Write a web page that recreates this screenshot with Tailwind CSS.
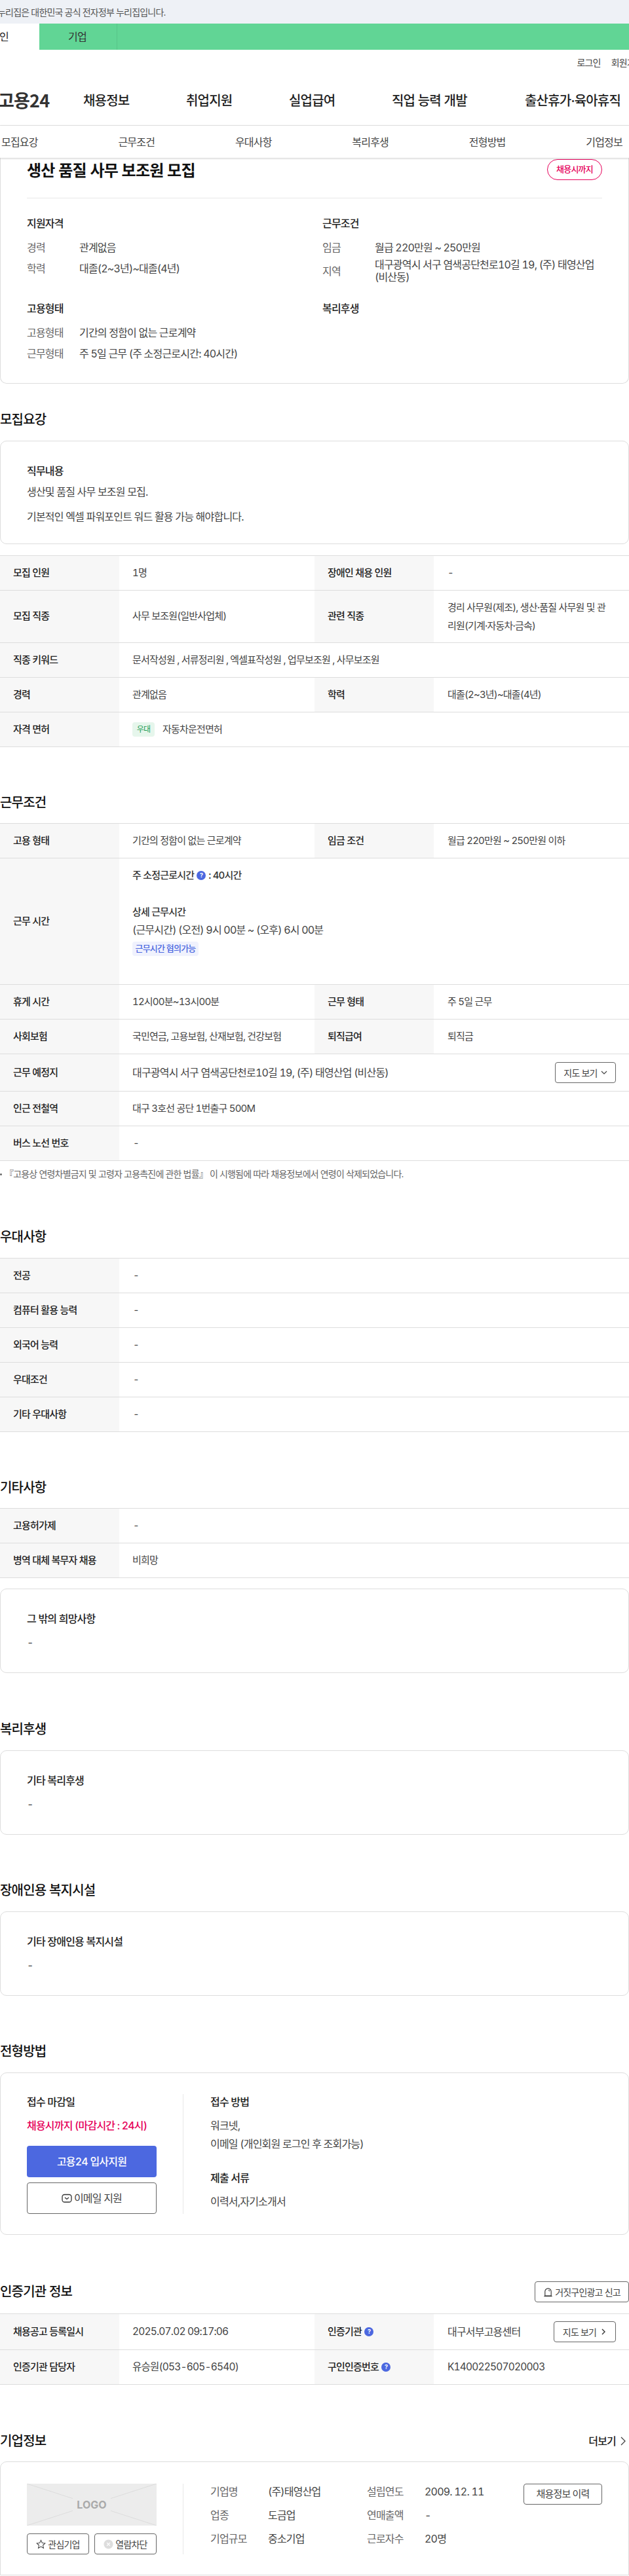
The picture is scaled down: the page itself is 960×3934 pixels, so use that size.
<!DOCTYPE html>
<html lang="ko">
<head>
<meta charset="UTF-8" />
<title>고용24 채용정보</title>
<script src="https://cdn.jsdelivr.net/npm/@tailwindcss/browser@4"></script>
</head>
<body class="font-['Inter','Noto_Sans_CJK_KR',sans-serif] text-[#222] tracking-[-0.05em] tabular-nums overflow-x-hidden bg-white">

<!-- gov banner -->
<div class="h-9 bg-[#eef1f6] flex items-center overflow-hidden">
  <p class="ml-[-19px] text-[14px] text-[#555] whitespace-nowrap">이 누리집은 대한민국 공식 전자정부 누리집입니다.</p>
</div>

<!-- member tabs -->
<div class="h-10 bg-[#61d595] flex text-[16px]">
  <div class="w-[60px] bg-white flex items-center overflow-hidden text-[#222]"><span class="ml-[-15px]">개인</span></div>
  <div class="w-[119px] border-r border-[#57c588] flex items-center justify-center text-[#333] pr-[2px]">기업</div>
</div>

<!-- header -->
<header class="h-[116px] border-b border-[#e5e5e5] flex flex-col overflow-hidden">
  <div class="flex justify-end gap-[16px] pt-[9px] text-[14px] text-[#444]">
    <span>로그인</span>
    <span class="mr-[-21px]">회원가입</span>
  </div>
  <nav class="mt-[10px] flex-1 flex items-center text-[20px] font-medium whitespace-nowrap">
    <span class="ml-[-3px] w-[130px] font-['Noto_Sans_CJK_KR',sans-serif] text-[27px] font-bold text-[#333]">고용24</span>
    <span class="w-[157px]">채용정보</span>
    <span class="w-[157px]">취업지원</span>
    <span class="w-[157px]">실업급여</span>
    <span class="w-[203px]">직업 능력 개발</span>
    <span>출산휴가·육아휴직</span>
  </nav>
</header>

<!-- anchor tabs -->
<div class="relative z-10 h-[49px] bg-white flex justify-between items-center pl-[2px] pr-[10px] text-[16px] text-[#444] shadow-[0_1px_3px_rgba(0,0,0,0.2)]">
  <span>모집요강</span><span>근무조건</span><span>우대사항</span><span>복리후생</span><span>전형방법</span><span>기업정보</span>
</div>

<!-- summary card -->
<section class="h-[345px] border border-t-0 border-[#ddd] rounded-b-[10px] px-[40px]">
  <div class="h-[62px] flex justify-between items-center border-b border-[#e8e8e8]">
    <h1 class="text-[24px] font-bold text-[#111] mt-[-22px]">생산 품질 사무 보조원 모집</h1>
    <span class="w-[84px] h-8 mt-[-26px] rounded-full border border-[#e6005a] text-[#e6005a] text-[13px] font-medium flex items-center justify-center">채용시까지</span>
  </div>
  <div class="grid grid-cols-[451px_1fr] mt-[26px]">
    <div class="h-[130px]">
      <h3 class="text-[16px] font-medium leading-6">지원자격</h3>
      <div class="mt-[13px] flex flex-col gap-[8px] text-[16px] leading-6 text-[#444]">
        <div class="flex"><span class="w-[80px] text-[#666]">경력</span><span>관계없음</span></div>
        <div class="flex"><span class="w-[80px] text-[#666]">학력</span><span>대졸(2~3년)~대졸(4년)</span></div>
      </div>
    </div>
    <div class="h-[130px]">
      <h3 class="text-[16px] font-medium leading-6">근무조건</h3>
      <div class="mt-[13px] flex flex-col gap-[8px] text-[16px] leading-6 text-[#444]">
        <div class="flex"><span class="w-[80px] text-[#666]">임금</span><span>월급 220만원 ~ 250만원</span></div>
        <div class="flex items-center mt-[-3px]"><span class="w-[80px] shrink-0 text-[#666]">지역</span><span class="leading-[19px]">대구광역시 서구 염색공단천로10길 19, (주) 태영산업 (비산동)</span></div>
      </div>
    </div>
    <div>
      <h3 class="text-[16px] font-medium leading-6">고용형태</h3>
      <div class="mt-[13px] flex flex-col gap-[8px] text-[16px] leading-6 text-[#444]">
        <div class="flex"><span class="w-[80px] text-[#666]">고용형태</span><span>기간의 정함이 없는 근로계약</span></div>
        <div class="flex"><span class="w-[80px] text-[#666]">근무형태</span><span>주 5일 근무 (주 소정근로시간: 40시간)</span></div>
      </div>
    </div>
    <div>
      <h3 class="text-[16px] font-medium leading-6">복리후생</h3>
    </div>
  </div>
</section>

<!-- 모집요강 -->
<h2 class="mt-[41px] text-[20px] font-medium leading-7 text-[#111]">모집요강</h2>
<section class="mt-[18px] h-[158px] border border-[#ddd] rounded-[10px] px-[40px] pt-[33px]">
  <h3 class="text-[16px] font-medium leading-6">직무내용</h3>
  <p class="mt-[8px] text-[16px] leading-6 text-[#444]">생산및 품질 사무 보조원 모집.</p>
  <p class="mt-[14px] text-[16px] leading-6 text-[#444]">기본적인 엑셀 파워포인트 워드 활용 가능 해야합니다.</p>
</section>

<div class="mt-[17px] border-t border-[#ddd] text-[15px]">
  <div class="flex h-[53px] border-b border-[#ddd]">
    <div class="w-[182px] bg-[#f7f7f7] flex items-center pl-5 font-medium">모집 인원</div>
    <div class="w-[298px] flex items-center pl-5 text-[#444]">1명</div>
    <div class="w-[182px] bg-[#f7f7f7] flex items-center pl-5 font-medium">장애인 채용 인원</div>
    <div class="flex-1 flex items-center pl-[21px] text-[#444]">-</div>
  </div>
  <div class="flex h-[80px] border-b border-[#ddd]">
    <div class="w-[182px] bg-[#f7f7f7] flex items-center pl-5 font-medium">모집 직종</div>
    <div class="w-[298px] flex items-center pl-5 text-[#444]">사무 보조원(일반사업체)</div>
    <div class="w-[182px] bg-[#f7f7f7] flex items-center pl-5 font-medium">관련 직종</div>
    <div class="flex-1 flex items-center pl-[21px] pr-[28px] leading-[28px] text-[#444]">경리 사무원(제조), 생산·품질 사무원 및 관리원(기계·자동차·금속)</div>
  </div>
  <div class="flex h-[53px] border-b border-[#ddd]">
    <div class="w-[182px] bg-[#f7f7f7] flex items-center pl-5 font-medium">직종 키워드</div>
    <div class="flex-1 flex items-center pl-5 text-[#444]">문서작성원 , 서류정리원 , 엑셀표작성원 , 업무보조원 , 사무보조원</div>
  </div>
  <div class="flex h-[53px] border-b border-[#ddd]">
    <div class="w-[182px] bg-[#f7f7f7] flex items-center pl-5 font-medium">경력</div>
    <div class="w-[298px] flex items-center pl-5 text-[#444]">관계없음</div>
    <div class="w-[182px] bg-[#f7f7f7] flex items-center pl-5 font-medium">학력</div>
    <div class="flex-1 flex items-center pl-[21px] text-[#444]">대졸(2~3년)~대졸(4년)</div>
  </div>
  <div class="flex h-[53px] border-b border-[#ddd]">
    <div class="w-[182px] bg-[#f7f7f7] flex items-center pl-5 font-medium">자격 면허</div>
    <div class="flex-1 flex items-center pl-5 text-[#444]">
      <span class="w-[34px] h-[22px] rounded-[4px] bg-[#e6f6ec] text-[#1f9d55] text-[12px] flex items-center justify-center mr-3">우대</span>자동차운전면허
    </div>
  </div>
</div>

<!-- 근무조건 -->
<h2 class="mt-[71px] text-[20px] font-medium leading-7 text-[#111]">근무조건</h2>
<div class="mt-[17px] border-t border-[#ddd] text-[15px]">
  <div class="flex h-[53px] border-b border-[#ddd]">
    <div class="w-[182px] bg-[#f7f7f7] flex items-center pl-5 font-medium">고용 형태</div>
    <div class="w-[298px] flex items-center pl-5 text-[#444]">기간의 정함이 없는 근로계약</div>
    <div class="w-[182px] bg-[#f7f7f7] flex items-center pl-5 font-medium">임금 조건</div>
    <div class="flex-1 flex items-center pl-[21px] text-[#444]">월급 220만원 ~ 250만원 이하</div>
  </div>
  <div class="flex h-[193px] border-b border-[#ddd]">
    <div class="w-[182px] bg-[#f7f7f7] flex items-center pl-5 font-medium">근무 시간</div>
    <div class="flex-1 pl-5 pt-[14px] text-[#444]">
      <p class="flex items-center font-medium text-[#333] leading-6">주 소정근로시간<span class="mx-1 w-[14px] h-[14px] rounded-full bg-[#4c68e0] text-white text-[9px] font-bold flex items-center justify-center">?</span>: 40시간</p>
      <p class="mt-[32px] font-medium text-[#333] leading-6">상세 근무시간</p>
      <p class="mt-[3px] text-[16px] leading-6">(근무시간) (오전) 9시 00분 ~ (오후) 6시 00분</p>
      <p class="mt-[6px] w-[101px] h-[22px] flex items-center justify-center rounded-[4px] bg-[#f0f2fd] text-[#4c68e0] text-[13px] font-medium">근무시간 협의가능</p>
    </div>
  </div>
  <div class="flex h-[53px] border-b border-[#ddd]">
    <div class="w-[182px] bg-[#f7f7f7] flex items-center pl-5 font-medium">휴게 시간</div>
    <div class="w-[298px] flex items-center pl-5 text-[#444]">12시00분~13시00분</div>
    <div class="w-[182px] bg-[#f7f7f7] flex items-center pl-5 font-medium">근무 형태</div>
    <div class="flex-1 flex items-center pl-[21px] text-[#444]">주 5일 근무</div>
  </div>
  <div class="flex h-[53px] border-b border-[#ddd]">
    <div class="w-[182px] bg-[#f7f7f7] flex items-center pl-5 font-medium">사회보험</div>
    <div class="w-[298px] flex items-center pl-5 text-[#444]">국민연금, 고용보험, 산재보험, 건강보험</div>
    <div class="w-[182px] bg-[#f7f7f7] flex items-center pl-5 font-medium">퇴직급여</div>
    <div class="flex-1 flex items-center pl-[21px] text-[#444]">퇴직금</div>
  </div>
  <div class="flex h-[57px] border-b border-[#ddd]">
    <div class="w-[182px] bg-[#f7f7f7] flex items-center pl-5 font-medium">근무 예정지</div>
    <div class="flex-1 flex items-center justify-between pl-5 pr-5 text-[#444]">
      <span class="text-[16px]">대구광역시 서구 염색공단천로10길 19, (주) 태영산업 (비산동)</span>
      <span class="w-[93px] h-8 border border-[#666] rounded-[4px] text-[14px] flex items-center justify-center gap-[5px]">지도 보기
        <svg class="w-[10px] h-[10px]" viewBox="0 0 10 10" fill="none" stroke="#444" stroke-width="1.2"><path d="M1 3l4 4 4-4"/></svg>
      </span>
    </div>
  </div>
  <div class="flex h-[53px] border-b border-[#ddd]">
    <div class="w-[182px] bg-[#f7f7f7] flex items-center pl-5 font-medium">인근 전철역</div>
    <div class="flex-1 flex items-center pl-5 text-[#444]">대구 3호선 공단 1번출구 500M</div>
  </div>
  <div class="flex h-[53px] border-b border-[#ddd]">
    <div class="w-[182px] bg-[#f7f7f7] flex items-center pl-5 font-medium">버스 노선 번호</div>
    <div class="flex-1 flex items-center pl-[21px] text-[#444]">-</div>
  </div>
</div>
<p class="mt-[10px] text-[14px] leading-5 text-[#666] flex items-center"><span class="w-[3px] h-[3px] rounded-full bg-[#666] mr-[4px]"></span>『고용상 연령차별금지 및 고령자 고용촉진에 관한 법률』 이 시행됨에 따라 채용정보에서 연령이 삭제되었습니다.</p>

<!-- 우대사항 -->
<h2 class="mt-[72px] text-[20px] font-medium leading-7 text-[#111]">우대사항</h2>
<div class="mt-[18px] border-t border-[#ddd] text-[15px]">
  <div class="flex h-[53px] border-b border-[#ddd]"><div class="w-[182px] bg-[#f7f7f7] flex items-center pl-5 font-medium">전공</div><div class="flex-1 flex items-center pl-[21px] text-[#444]">-</div></div>
  <div class="flex h-[53px] border-b border-[#ddd]"><div class="w-[182px] bg-[#f7f7f7] flex items-center pl-5 font-medium">컴퓨터 활용 능력</div><div class="flex-1 flex items-center pl-[21px] text-[#444]">-</div></div>
  <div class="flex h-[53px] border-b border-[#ddd]"><div class="w-[182px] bg-[#f7f7f7] flex items-center pl-5 font-medium">외국어 능력</div><div class="flex-1 flex items-center pl-[21px] text-[#444]">-</div></div>
  <div class="flex h-[53px] border-b border-[#ddd]"><div class="w-[182px] bg-[#f7f7f7] flex items-center pl-5 font-medium">우대조건</div><div class="flex-1 flex items-center pl-[21px] text-[#444]">-</div></div>
  <div class="flex h-[53px] border-b border-[#ddd]"><div class="w-[182px] bg-[#f7f7f7] flex items-center pl-5 font-medium">기타 우대사항</div><div class="flex-1 flex items-center pl-[21px] text-[#444]">-</div></div>
</div>

<!-- 기타사항 -->
<h2 class="mt-[71px] text-[20px] font-medium leading-7 text-[#111]">기타사항</h2>
<div class="mt-[17px] border-t border-[#ddd] text-[15px]">
  <div class="flex h-[53px] border-b border-[#ddd]"><div class="w-[182px] bg-[#f7f7f7] flex items-center pl-5 font-medium">고용허가제</div><div class="flex-1 flex items-center pl-[21px] text-[#444]">-</div></div>
  <div class="flex h-[53px] border-b border-[#ddd]"><div class="w-[182px] bg-[#f7f7f7] flex items-center pl-5 font-medium">병역 대체 복무자 채용</div><div class="flex-1 flex items-center pl-5 text-[#444]">비희망</div></div>
</div>
<section class="mt-[16px] h-[129px] border border-[#ddd] rounded-[10px] px-[40px] pt-[33px]">
  <h3 class="text-[16px] font-medium leading-6">그 밖의 희망사항</h3>
  <p class="mt-[12px] text-[16px] leading-6 text-[#444]">-</p>
</section>

<!-- 복리후생 -->
<h2 class="mt-[72px] text-[20px] font-medium leading-7 text-[#111]">복리후생</h2>
<section class="mt-[18px] h-[129px] border border-[#ddd] rounded-[10px] px-[40px] pt-[33px]">
  <h3 class="text-[16px] font-medium leading-6">기타 복리후생</h3>
  <p class="mt-[12px] text-[16px] leading-6 text-[#444]">-</p>
</section>

<!-- 장애인용 복지시설 -->
<h2 class="mt-[71px] text-[20px] font-medium leading-7 text-[#111]">장애인용 복지시설</h2>
<section class="mt-[18px] h-[129px] border border-[#ddd] rounded-[10px] px-[40px] pt-[33px]">
  <h3 class="text-[16px] font-medium leading-6">기타 장애인용 복지시설</h3>
  <p class="mt-[12px] text-[16px] leading-6 text-[#444]">-</p>
</section>

<!-- 전형방법 -->
<h2 class="mt-[71px] text-[20px] font-medium leading-7 text-[#111]">전형방법</h2>
<section class="mt-[18px] h-[248px] border border-[#ddd] rounded-[10px] px-[40px] pt-[32px] flex items-start">
  <div class="w-[239px] h-[183px] border-r border-[#e8e8e8] pr-[40px]">
    <h3 class="text-[16px] font-medium leading-6">접수 마감일</h3>
    <p class="mt-[12px] text-[16px] font-medium leading-6 text-[#e6005a] whitespace-nowrap">채용시까지 (마감시간 : 24시)</p>
    <div class="mt-[19px] h-12 rounded-[4px] bg-[#4c68e0] text-white text-[16px] font-medium flex items-center justify-center">고용24 입사지원</div>
    <div class="mt-2 h-12 rounded-[4px] border border-[#666] text-[16px] text-[#444] flex items-center justify-center gap-[3px]">
      <svg class="w-4 h-4" viewBox="0 0 16 16" fill="none" stroke="#333" stroke-width="1.3"><rect x="1" y="2.5" width="14" height="11.5" rx="3.5"/><path d="M5 7l3 2.5L11 7"/></svg>이메일 지원
    </div>
  </div>
  <div class="pl-[41px]">
    <h3 class="text-[16px] font-medium leading-6">접수 방법</h3>
    <p class="mt-[10px] text-[16px] leading-7 text-[#444]">워크넷,<br>이메일 (개인회원 로그인 후 조회가능)</p>
    <h3 class="mt-[26px] text-[16px] font-medium leading-6">제출 서류</h3>
    <p class="mt-[12px] text-[16px] leading-6 text-[#444]">이력서,자기소개서</p>
  </div>
</section>

<!-- 인증기관 정보 -->
<div class="mt-[71px] flex justify-between items-center">
  <h2 class="text-[20px] font-medium leading-7 text-[#111]">인증기관 정보</h2>
  <span class="w-[144px] h-8 border border-[#666] rounded-[4px] text-[14px] text-[#444] flex items-center justify-center gap-[3px]">
    <svg class="w-[15px] h-[15px]" viewBox="0 0 16 16" fill="none" stroke="#333" stroke-width="1.2"><path d="M3 14V7a5 5 0 0 1 10 0v7z"/><path d="M1.5 14.5h13M9 4.5l1.5 2"/></svg>거짓구인광고 신고
  </span>
</div>
<div class="mt-[17px] border-t border-[#ddd] text-[15px]">
  <div class="flex h-[55px] border-b border-[#ddd]">
    <div class="w-[182px] bg-[#f7f7f7] flex items-center pl-5 font-medium">채용공고 등록일시</div>
    <div class="w-[298px] flex items-center pl-5 text-[15.5px] text-[#444]">2025.07.02 09:17:06</div>
    <div class="w-[182px] bg-[#f7f7f7] flex items-center pl-5 font-medium">인증기관<span class="ml-1 w-[14px] h-[14px] rounded-full bg-[#4c68e0] text-white text-[9px] font-bold flex items-center justify-center">?</span></div>
    <div class="flex-1 flex items-center justify-between pl-[21px] pr-5 text-[#444]">
      <span class="text-[16px]">대구서부고용센터</span>
      <span class="w-[95px] h-8 border border-[#666] rounded-[4px] text-[14px] flex items-center justify-center gap-[6px]">지도 보기
        <svg class="w-[10px] h-[10px]" viewBox="0 0 10 10" fill="none" stroke="#333" stroke-width="1.4"><path d="M3 1l4 4-4 4"/></svg>
      </span>
    </div>
  </div>
  <div class="flex h-[53px] border-b border-[#ddd]">
    <div class="w-[182px] bg-[#f7f7f7] flex items-center pl-5 font-medium">인증기관 담당자</div>
    <div class="w-[298px] flex items-center pl-5 text-[15.5px] text-[#444]">유승원(053-605-6540)</div>
    <div class="w-[182px] bg-[#f7f7f7] flex items-center pl-5 font-medium">구인인증번호<span class="ml-1 w-[14px] h-[14px] rounded-full bg-[#4c68e0] text-white text-[9px] font-bold flex items-center justify-center">?</span></div>
    <div class="flex-1 flex items-center pl-[21px] text-[15.5px] text-[#444]">K140022507020003</div>
  </div>
</div>

<!-- 기업정보 -->
<div class="mt-[72px] flex justify-between items-center pr-[4px]">
  <h2 class="text-[20px] font-medium leading-7 text-[#111]">기업정보</h2>
  <span class="text-[16px] font-medium flex items-center gap-[6px]">더보기
    <svg class="w-[10px] h-[14px]" viewBox="0 0 10 14" fill="none" stroke="#444" stroke-width="1.3"><path d="M2 1l6 6-6 6"/></svg>
  </span>
</div>
<section class="mt-[17px] h-[174px] border border-[#ddd] rounded-t-[10px] px-[40px] pt-[33px] flex text-[16px]">
  <div class="w-[239px] h-[108px] border-r border-[#e8e8e8] pr-[40px]">
    <div class="relative h-[64px] bg-[#ececec] flex items-center justify-center overflow-hidden">
      <svg class="absolute inset-0 w-full h-full" viewBox="0 0 199 64" preserveAspectRatio="none" stroke="#dcdcdc"><path d="M0 0L199 64M199 0L0 64"/></svg>
      <span class="relative bg-[#ececec] px-[6px] text-[#aaa] font-bold tracking-normal">LOGO</span>
    </div>
    <div class="mt-3 flex justify-between text-[14px] text-[#444]">
      <span class="w-[95px] h-8 border border-[#666] rounded-[4px] flex items-center justify-center gap-[3px]">
        <svg class="w-[15px] h-[15px]" viewBox="0 0 16 16" fill="none" stroke="#444" stroke-width="1.1"><path d="M8 1.5l2 4.3 4.7.6-3.4 3.2.9 4.7L8 11.9l-4.2 2.4.9-4.7L1.3 6.4 6 5.8z"/></svg>관심기업
      </span>
      <span class="w-[95px] h-8 border border-[#666] rounded-[4px] flex items-center justify-center gap-[3px]">
        <svg class="w-[15px] h-[15px]" viewBox="0 0 16 16"><circle cx="8" cy="8" r="7.5" fill="#ddd"/><path d="M5.5 5.5l5 5M10.5 5.5l-5 5" stroke="#fff" stroke-width="1.3"/></svg>열람차단
      </span>
    </div>
  </div>
  <div class="pl-[41px] grid grid-cols-[88px_151px_88px_151px] auto-rows-[36px] text-[#444] leading-6">
    <span class="text-[#666]">기업명</span><span>(주)태영산업</span><span class="text-[#666]">설립연도</span><span>2009. 12. 11</span>
    <span class="text-[#666]">업종</span><span>도금업</span><span class="text-[#666]">연매출액</span><span>-</span>
    <span class="text-[#666]">기업규모</span><span>중소기업</span><span class="text-[#666]">근로자수</span><span>20명</span>
  </div>
  <span class="ml-auto w-[120px] h-8 border border-[#666] rounded-[4px] text-[15px] text-[#444] flex items-center justify-center">채용정보 이력</span>
</section>

</body>
</html>
